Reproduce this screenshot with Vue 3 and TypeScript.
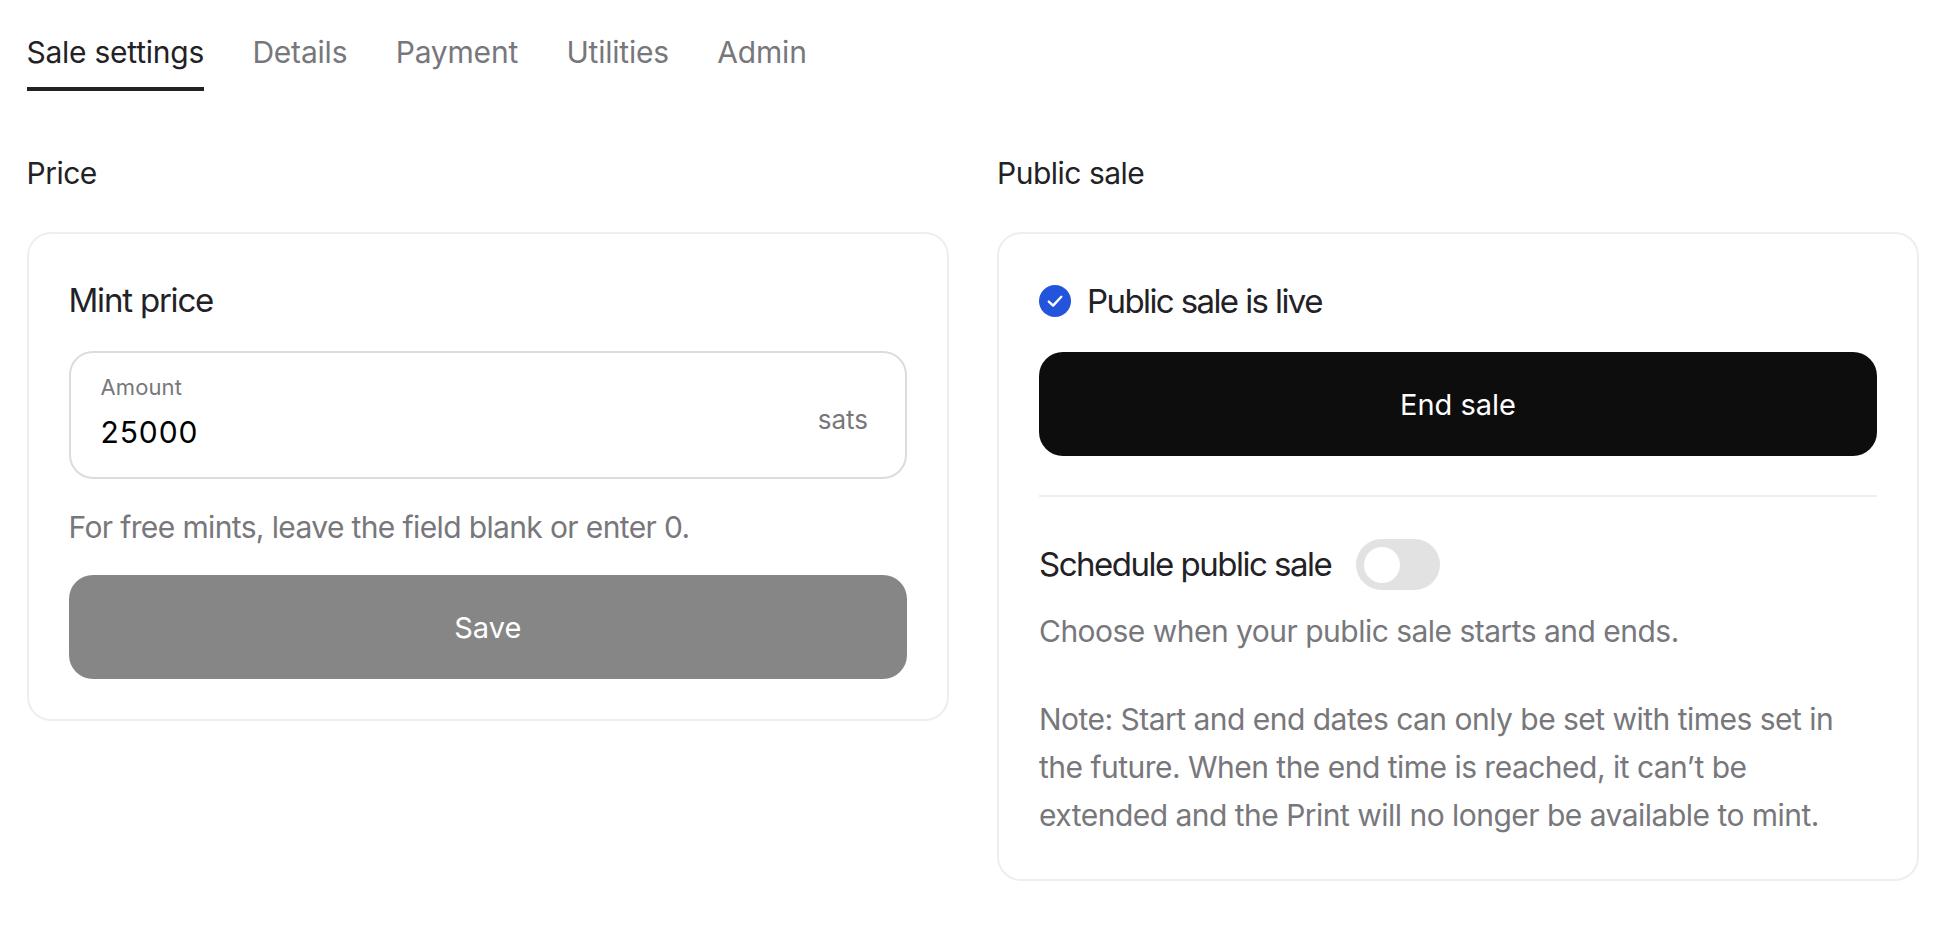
<script setup lang="ts">
const tabs: string[] = ['Sale settings', 'Details', 'Payment', 'Utilities', 'Admin']
</script>

<template>
  <div class="page">
    <nav class="tabs">
      <div v-for="(t, i) in tabs" :key="t" class="tab" :class="{ active: i === 0 }">{{ t }}</div>
    </nav>
    <div class="cols">
      <section class="col">
        <h2 class="heading">Price</h2>
        <div class="card">
          <h3 class="title mint">Mint price</h3>
          <div class="field">
            <div class="field-main">
              <div class="field-label">Amount</div>
              <div class="field-value">25000</div>
            </div>
            <div class="suffix">sats</div>
          </div>
          <p class="muted help">For free mints, leave the field blank or enter 0.</p>
          <button class="btn disabled" type="button">Save</button>
        </div>
      </section>
      <section class="col">
        <h2 class="heading">Public sale</h2>
        <div class="card">
          <div class="live">
            <svg class="check" viewBox="0 0 32 32" width="32" height="32">
              <circle cx="16" cy="16" r="16" fill="#2354dc" />
              <path d="M9.8 16.6l4.3 4 8.2-8.8" fill="none" stroke="#fff" stroke-width="2.4" stroke-linecap="round" stroke-linejoin="round" />
            </svg>
            <h3 class="title">Public sale is live</h3>
          </div>
          <button class="btn dark" type="button">End sale</button>
          <div class="divider"></div>
          <div class="schedule">
            <h3 class="title sched">Schedule public sale</h3>
            <span class="toggle"><span class="knob"></span></span>
          </div>
          <p class="muted choose">Choose when your public sale starts and ends.</p>
          <p class="muted note">Note: Start and end dates can only be set with times set in the future. When the end time is reached, it can’t be extended and the Print will no longer be available to mint.</p>
        </div>
      </section>
    </div>
  </div>
</template>

<style>
html, body { background: #fff; }
</style>

<style scoped>
.page {
  width: 1950px;
  height: 932px;
  box-sizing: border-box;
  padding: 27px 31px 0 26.5px;
  font-family: Inter, "Liberation Sans", sans-serif;
  color: #222226;
  overflow: hidden;
}
.tabs {
  display: flex;
  gap: 48.4px;
  height: 64px;
}
.tab {
  font-size: 30px;
  line-height: 50px;
  height: 64px;
  box-sizing: border-box;
  color: #77777c;
  letter-spacing: -0.2px;
}
.tab.active {
  color: #222226;
  border-bottom: 4px solid #222226;
  letter-spacing: -0.25px;
}
.cols {
  display: grid;
  grid-template-columns: 922.5px 922px;
  gap: 48px;
  margin-top: 60px;
}
.heading {
  margin: 0;
  font-size: 30px;
  font-weight: 400;
  line-height: 44px;
  letter-spacing: -0.5px;
}
.card {
  margin-top: 37px;
  border: 2px solid #eeeeef;
  border-radius: 24px;
  padding: 40px;
  box-sizing: border-box;
}
.title {
  margin: 0;
  font-size: 33px;
  font-weight: 400;
  line-height: 53px;
  letter-spacing: -1.6px;
  color: #222226;
}
.title.mint {
  letter-spacing: -1.2px;
}
.title.sched {
  letter-spacing: -1.5px;
}
.field {
  margin-top: 24px;
  height: 128px;
  box-sizing: border-box;
  border: 2px solid #dcdcdf;
  border-radius: 24px;
  padding: 0 37px 0 30px;
  display: flex;
  align-items: center;
  justify-content: space-between;
}
.field-main {
  margin-top: -6px;
}
.field-label {
  font-size: 22px;
  line-height: 34px;
  letter-spacing: 0.1px;
  color: #77777c;
}
.field-value {
  font-size: 30px;
  line-height: 44px;
  margin-top: 6px;
  color: #000;
  letter-spacing: 0.9px;
}
.suffix {
  font-size: 26px;
  margin-top: 8px;
  color: #77777c;
}
.muted {
  margin: 0;
  font-size: 30px;
  line-height: 48px;
  color: #77777c;
  letter-spacing: -0.52px;
}
.help {
  margin-top: 24px;
  letter-spacing: -0.63px;
}
.btn {
  display: block;
  width: 100%;
  height: 104px;
  border: 0;
  border-radius: 24px;
  font-family: inherit;
  font-size: 29px;
  color: #fff;
}
.btn.disabled {
  margin-top: 24px;
  background: #868686;
}
.btn.dark {
  margin-top: 24px;
  background: #0d0d0d;
}
.live {
  display: flex;
  align-items: center;
  gap: 16px;
  height: 54px;
}
.check {
  flex: none;
}
.divider {
  height: 2px;
  background: #eeeeef;
  margin-top: 39px;
}
.schedule {
  display: flex;
  align-items: center;
  gap: 25px;
  margin-top: 41px;
}
.toggle {
  width: 84px;
  height: 51px;
  border-radius: 26px;
  background: #e2e2e2;
  display: flex;
  align-items: center;
  padding-left: 8px;
  box-sizing: border-box;
}
.knob {
  width: 36px;
  height: 36px;
  border-radius: 50%;
  background: #fff;
}
.choose {
  margin-top: 16px;
}
.note {
  margin-top: 40px;
}
</style>
